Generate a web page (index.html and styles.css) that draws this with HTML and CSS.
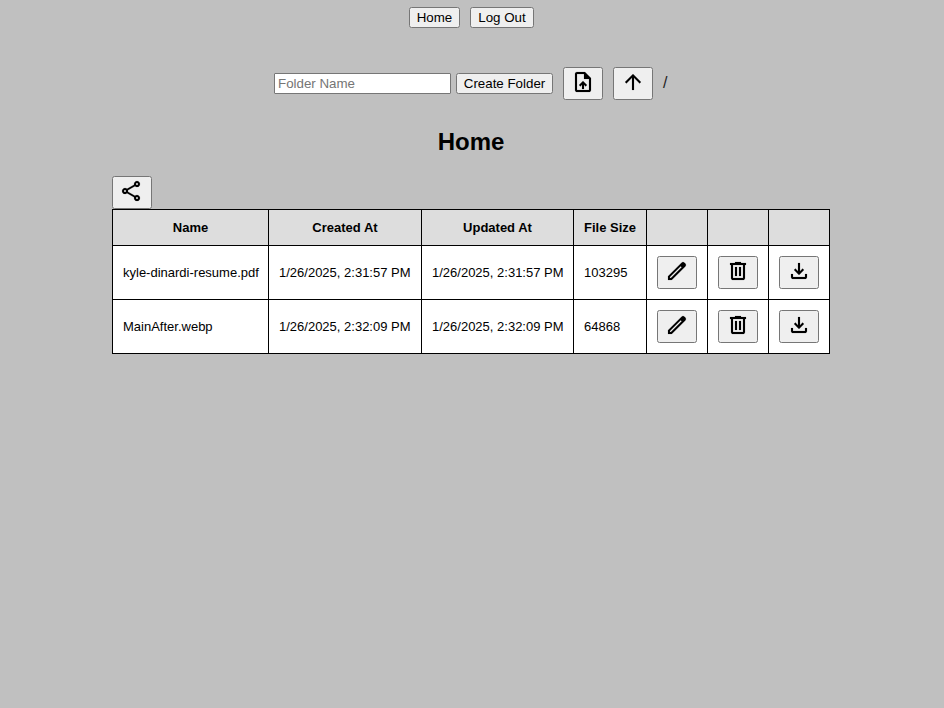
FILE: index.html
```html
<!DOCTYPE html>
<html lang="en">
<head>
<meta charset="utf-8">
<title>Home</title>
<link rel="stylesheet" href="styles.css">
</head>
<body>
<svg class="sprite" aria-hidden="true">
  <symbol id="upload" viewBox="0 -960 960 960"><path d="M440-200h80v-167l64 64 56-57-160-160-160 160 57 56 63-63v167ZM240-80q-33 0-56.500-23.500T160-160v-640q0-33 23.500-56.500T240-880h320l240 240v480q0 33-23.500 56.500T720-80H240Zm280-520v-200H240v640h480v-440H520Z"/><path d="M540-860v240h240Z"/></symbol>
  <symbol id="up" viewBox="0 -960 960 960"><path d="M440-160v-487L216-423l-56-57 320-320 320 320-56 57-224-224v487h-80Z"/></symbol>
  <symbol id="share" viewBox="0 -960 960 960"><path d="M680-80q-50 0-85-35t-35-85q0-6 3-28L282-392q-16 15-37 23.500t-45 8.500q-50 0-85-35t-35-85q0-50 35-85t85-35q24 0 45 8.500t37 23.500l281-164q-2-7-2.500-13.500T560-760q0-50 35-85t85-35q50 0 85 35t35 85q0 50-35 85t-85 35q-24 0-45-8.500T598-672L317-508q2 7 2.500 13.500t.5 14.500q0 8-.5 14.500T317-452l281 164q16-15 37-23.500t45-8.500q50 0 85 35t35 85q0 50-35 85t-85 35Zm0-80q17 0 28.500-11.500T720-200q0-17-11.500-28.500T680-240q-17 0-28.500 11.500T640-200q0 17 11.500 28.500T680-160ZM200-440q17 0 28.500-11.500T240-480q0-17-11.500-28.500T200-520q-17 0-28.500 11.500T160-480q0 17 11.500 28.500T200-440Zm480-280q17 0 28.500-11.500T720-760q0-17-11.500-28.500T680-800q-17 0-28.500 11.500T640-760q0 17 11.500 28.500T680-720Z"/></symbol>
  <symbol id="edit" viewBox="0 -960 960 960"><path fill-rule="evenodd" d="M120-120v-150l543-543q24-24 58-24t58 24l34 34q24 24 24 58t-24 58L270-120H120Zm78-78h40l430-430-40-40-430 430v40Z"/></symbol>
  <symbol id="delete" viewBox="0 -960 960 960"><path d="M280-120q-33 0-56.500-23.500T200-200v-520h-40v-80h200v-40h240v40h200v80h-40v520q0 33-23.500 56.500T680-120H280Zm400-600H280v520h400v-520ZM360-280h80v-360h-80v360Zm160 0h80v-360h-80v360Z"/></symbol>
  <symbol id="download" viewBox="0 -960 960 960"><path d="M480-320 280-520l56-58 104 104v-326h80v326l104-104 56 58-200 200ZM240-160q-33 0-56.500-23.500T160-240v-120h80v120h480v-120h80v120q0 33-23.500 56.500T720-160H240Z"/></symbol>
</svg>
<nav class="nav">
  <button class="btn btn-home">Home</button>
  <button class="btn btn-logout">Log Out</button>
</nav>
<div class="toolbar">
  <form class="create">
    <input class="field" type="text" placeholder="Folder Name">
    <button class="btn btn-create" type="button">Create Folder</button>
  </form>
  <button class="icon-btn" aria-label="Upload"><svg><use href="#upload"/></svg></button>
  <button class="icon-btn" aria-label="Up"><svg><use href="#up"/></svg></button>
  <span class="path">/</span>
</div>
<h2 class="title">Home</h2>
<main class="files">
  <button class="icon-btn" aria-label="Share"><svg><use href="#share"/></svg></button>
  <table class="table">
    <colgroup><col class="c-name"><col class="c-created"><col class="c-updated"><col class="c-size"><col class="c-act"><col class="c-act"><col class="c-act"></colgroup>
    <thead>
      <tr><th>Name</th><th>Created At</th><th>Updated At</th><th>File Size</th><th></th><th></th><th></th></tr>
    </thead>
    <tbody>
      <tr>
        <td>kyle-dinardi-resume.pdf</td><td>1/26/2025, 2:31:57 PM</td><td>1/26/2025, 2:31:57 PM</td><td>103295</td>
        <td><button class="icon-btn" aria-label="Edit"><svg><use href="#edit"/></svg></button></td>
        <td><button class="icon-btn" aria-label="Delete"><svg><use href="#delete"/></svg></button></td>
        <td><button class="icon-btn" aria-label="Download"><svg><use href="#download"/></svg></button></td>
      </tr>
      <tr>
        <td>MainAfter.webp</td><td>1/26/2025, 2:32:09 PM</td><td>1/26/2025, 2:32:09 PM</td><td>64868</td>
        <td><button class="icon-btn" aria-label="Edit"><svg><use href="#edit"/></svg></button></td>
        <td><button class="icon-btn" aria-label="Delete"><svg><use href="#delete"/></svg></button></td>
        <td><button class="icon-btn" aria-label="Download"><svg><use href="#download"/></svg></button></td>
      </tr>
    </tbody>
  </table>
</main>
</body>
</html>
```
FILE: styles.css
```css
* { box-sizing: border-box; }

body {
  margin: 0;
  padding-top: 7px;
  background: #c0c0c0;
  color: #000;
  font: 13.3333px/15px "Liberation Sans", Arial, sans-serif;
}

.sprite { display: none; }

.nav {
  display: flex;
  justify-content: center;
  gap: 10px;
  padding-right: 1px;
}

.btn {
  height: 21px;
  padding: 1px 0 2px;
  border: 1px solid #767676;
  border-radius: 2.5px;
  background: #efefef;
  color: #000;
  font: inherit;
  white-space: nowrap;
}

.btn-home { width: 51px; }
.btn-logout { width: 64px; }
.btn-create { width: 97px; }

.toolbar {
  display: flex;
  justify-content: center;
  align-items: center;
  gap: 10px;
  height: 33px;
  margin-top: 39px;
  padding-right: 3px;
}

.path {
  position: relative;
  top: -1px;
  width: 4px;
  color: #222;
  font-size: 16px;
}

.create {
  display: flex;
  gap: 5px;
}

.field {
  width: 177px;
  height: 21px;
  padding: 1px 3px;
  border: 1px solid #767676;
  border-radius: 1px;
  background: #fff;
  font: inherit;
}

.field::placeholder { color: #757575; }

.icon-btn {
  display: block;
  width: 40px;
  height: 33px;
  padding: 2px 7px 5px;
  border: 1px solid #767676;
  border-radius: 2.5px;
  background: #efefef;
  color: #000;
}

.icon-btn svg {
  display: block;
  width: 24px;
  height: 24px;
  fill: currentColor;
  stroke: currentColor;
  stroke-width: 5px;
}

.title {
  margin: 28px 0 20px;
  padding-right: 2px;
  font-size: 24px;
  line-height: 28px;
  text-align: center;
}

.files {
  width: 718px;
  margin-left: 112px;
}

.table {
  width: 718px;
  border-collapse: collapse;
  table-layout: fixed;
  font-size: 13px;
}

.c-name { width: 156px; }
.c-created { width: 153px; }
.c-updated { width: 152px; }
.c-size { width: 73px; }
.c-act { width: 61px; }

.table th,
.table td {
  padding: 10px;
  border: 1px solid #000;
  white-space: nowrap;
}

.table th {
  height: 36px;
  background: #ddd;
}

.table td {
  height: 54px;
  background: #fff;
}
```
